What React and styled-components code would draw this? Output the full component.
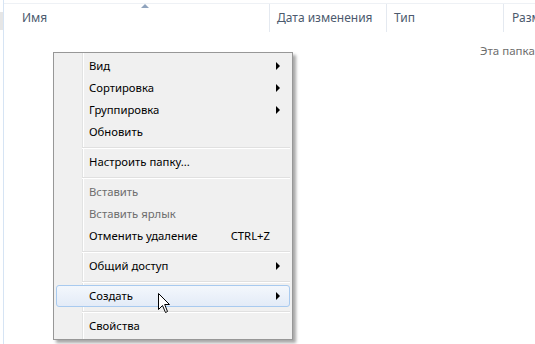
import React from 'react';
import styled, { createGlobalStyle } from 'styled-components';

const GlobalStyle = createGlobalStyle`
  html, body {
    margin: 0;
    padding: 0;
    background: #fff;
  }
  body {
    font-family: "Segoe UI", "Noto Sans", "Open Sans", sans-serif;
    font-size: 12px;
    color: #000;
  }
`;

const Window = styled.div`
  position: relative;
  width: 535px;
  height: 344px;
  overflow: hidden;
  display: flex;
  background: #fff;
`;

const NavStrip = styled.div`
  width: 4px;
  flex-shrink: 0;
  border-right: 1px solid #d6e4f4;
  padding-top: 12px;
  box-sizing: border-box;
`;

const NavScrap = styled.div`
  height: 18px;
  background: #e6e6e6;
`;

const Content = styled.div`
  flex: 1;
  display: flex;
  flex-direction: column;
  min-width: 0;
  overflow: hidden;
`;

const Header = styled.div`
  display: flex;
  height: 28px;
  margin-top: 3px;
  border-top: 1px solid #eef1f5;
`;

const HeaderCell = styled.div`
  position: relative;
  flex: 0 0 ${p => p.width}px;
  box-sizing: border-box;
  padding-left: ${p => p.pad}px;
  border-right: 1px solid #e4e9f0;
  display: flex;
  align-items: center;
  color: #4c5a6e;
  white-space: nowrap;
  overflow: hidden;
  padding-bottom: 1px;
`;

const SortArrow = styled.span`
  position: absolute;
  top: 0;
  left: 137px;
  width: 0;
  height: 0;
  border-left: 4px solid transparent;
  border-right: 4px solid transparent;
  border-bottom: 4px solid #8fa3bd;
`;

const EmptyNote = styled.div`
  padding-left: 476px;
  margin-top: 11px;
  color: #6d6d6d;
  font-size: 11.5px;
  white-space: nowrap;
`;

const Menu = styled.div`
  position: absolute;
  left: 53px;
  top: 52px;
  width: 240px;
  box-sizing: border-box;
  padding: 2px;
  border: 1px solid #979797;
  background:
    linear-gradient(to right,
      transparent 28px, #e2e3e3 28px, #e2e3e3 29px,
      #ffffff 29px, #ffffff 30px, transparent 30px),
    #f0f0f0;
  box-shadow: 3px 3px 3px rgba(0, 0, 0, 0.35);
  font-size: 11.3px;
`;

const Item = styled.div`
  height: 22px;
  box-sizing: border-box;
  display: grid;
  grid-template-columns: 1fr auto 19px;
  align-items: center;
  padding-left: 32px;
  padding-bottom: 1px;
  color: ${p => (p.disabled ? '#6d6d6d' : '#000')};
  border: 1px solid ${p => (p.active ? '#a8caef' : 'transparent')};
  border-radius: 3px;
  background: ${p => (p.active ? 'linear-gradient(#f3f7fc, #e3ebf7)' : 'transparent')};
  white-space: nowrap;
`;

const Shortcut = styled.span`
  color: #000;
`;

const SubArrow = styled.span`
  justify-self: start;
  margin-left: 6px;
  width: 0;
  height: 0;
  border-top: 4px solid transparent;
  border-bottom: 4px solid transparent;
  border-left: 4px solid #000;
`;

const Separator = styled.div`
  height: 2px;
  margin: 4px 0 2px 26px;
  border-top: 1px solid #e0e0e0;
  border-bottom: 1px solid #ffffff;
  box-sizing: border-box;
`;

const Cursor = styled.svg`
  position: absolute;
  left: 158px;
  top: 293px;
`;

const menu = [
  { label: 'Вид', sub: true },
  { label: 'Сортировка', sub: true },
  { label: 'Группировка', sub: true },
  { label: 'Обновить' },
  'sep',
  { label: 'Настроить папку...' },
  'sep',
  { label: 'Вставить', disabled: true },
  { label: 'Вставить ярлык', disabled: true },
  { label: 'Отменить удаление', shortcut: 'CTRL+Z' },
  'sep',
  { label: 'Общий доступ', sub: true },
  'sep',
  { label: 'Создать', sub: true, active: true },
  'sep',
  { label: 'Свойства' },
];

export default function App() {
  return (
    <>
      <GlobalStyle />
      <Window>
        <NavStrip>
          <NavScrap />
        </NavStrip>
        <Content>
          <Header>
            <HeaderCell width={266} pad={18}>
              Имя
              <SortArrow />
            </HeaderCell>
            <HeaderCell width={117} pad={7}>Дата изменения</HeaderCell>
            <HeaderCell width={117} pad={7}>Тип</HeaderCell>
            <HeaderCell width={60} pad={8}>Размер</HeaderCell>
          </Header>
          <EmptyNote>Эта папка пуста.</EmptyNote>
        </Content>

        <Menu>
          {menu.map((m, i) =>
            m === 'sep' ? (
              <Separator key={i} />
            ) : (
              <Item key={i} disabled={m.disabled} active={m.active}>
                <span>{m.label}</span>
                {m.shortcut ? <Shortcut>{m.shortcut}</Shortcut> : <span />}
                {m.sub ? <SubArrow /> : <span />}
              </Item>
            )
          )}
        </Menu>

        <Cursor width="14" height="22" viewBox="0 0 14 22">
          <path
            d="M0.5 0.5 L0.5 16.5 L4.5 12.5 L7.5 19.5 L9.5 18.5 L6.7 11.5 L11.5 11.5 Z"
            fill="#fff"
            stroke="#000"
            strokeWidth="1"
            strokeLinejoin="miter"
          />
        </Cursor>
      </Window>
    </>
  );
}
